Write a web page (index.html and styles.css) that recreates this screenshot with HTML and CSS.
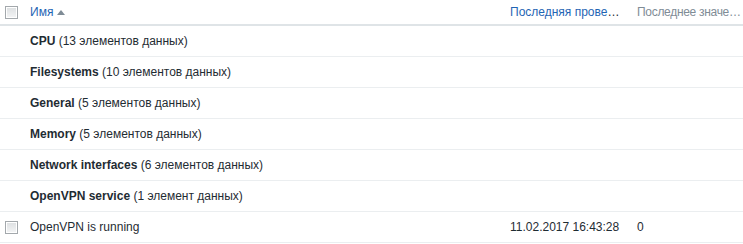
FILE: index.html
```html
<!DOCTYPE html>
<html>
<head>
<meta charset="utf-8">
<link rel="stylesheet" href="styles.css">
</head>
<body>
<table class="grid">
  <colgroup>
    <col class="c-check">
    <col class="c-name">
    <col class="c-date">
    <col class="c-val">
  </colgroup>
  <thead>
    <tr>
      <th class="cell-check"><span class="cb"></span></th>
      <th><a class="link">Имя</a><span class="arrow"></span></th>
      <th class="cell-date"><a class="link">Последняя проверка</a></th>
      <th class="muted cell-val tight">Последнее значение</th>
    </tr>
  </thead>
  <tbody>
    <tr class="group"><td></td><td colspan="3"><b>CPU</b> (13 элементов данных)</td></tr>
    <tr class="group"><td></td><td colspan="3"><b>Filesystems</b> (10 элементов данных)</td></tr>
    <tr class="group"><td></td><td colspan="3"><b>General</b> (5 элементов данных)</td></tr>
    <tr class="group"><td></td><td colspan="3"><b>Memory</b> (5 элементов данных)</td></tr>
    <tr class="group"><td></td><td colspan="3"><b>Network interfaces</b> (6 элементов данных)</td></tr>
    <tr class="group"><td></td><td colspan="3"><b>OpenVPN service</b> (1 элемент данных)</td></tr>
    <tr>
      <td class="cell-check"><span class="cb"></span></td>
      <td>OpenVPN is running</td>
      <td class="cell-date">11.02.2017 16:43:28</td>
      <td class="cell-val">0</td>
    </tr>
  </tbody>
</table>
</body>
</html>
```
FILE: styles.css
```css
html, body {
  margin: 0;
  padding: 0;
  background: #ffffff;
}
body {
  font-family: "Liberation Sans", Arial, sans-serif;
  font-size: 12px;
  color: #1f2c33;
}
.grid {
  width: 743px;
  border-collapse: collapse;
  table-layout: fixed;
}
.c-check { width: 25px; }
.c-date { width: 127px; }
.c-val { width: 111px; }
th, td {
  padding: 0 3px 0 5px;
  text-align: left;
  white-space: nowrap;
  overflow: hidden;
  text-overflow: ellipsis;
  vertical-align: middle;
}
th {
  font-weight: normal;
  height: 24px;
  border-bottom: 2px solid #dfe4e7;
}
td {
  height: 30px;
  border-bottom: 1px solid #ebeef0;
}
.cell-check {
  padding: 0 0 0 5px;
}
.cell-date {
  padding-right: 10px;
}
.cell-val {
  padding-right: 0;
}
.tight {
  letter-spacing: -0.3px;
}
.cb {
  display: block;
  width: 11px;
  height: 11px;
  border: 1px solid #a3a8ac;
  background: linear-gradient(#dcdfe1, #f4f5f6);
  box-shadow: inset 0 0 0 1px #ffffff;
}
thead .cb {
  margin-top: 1px;
}
.link {
  color: #1f65b4;
}
.muted {
  color: #7f8c96;
}
.arrow {
  display: inline-block;
  width: 0;
  height: 0;
  margin-left: 4px;
  border-left: 4px solid transparent;
  border-right: 4px solid transparent;
  border-bottom: 5px solid #7f8c96;
  vertical-align: 1px;
}
b {
  font-weight: bold;
}
```
